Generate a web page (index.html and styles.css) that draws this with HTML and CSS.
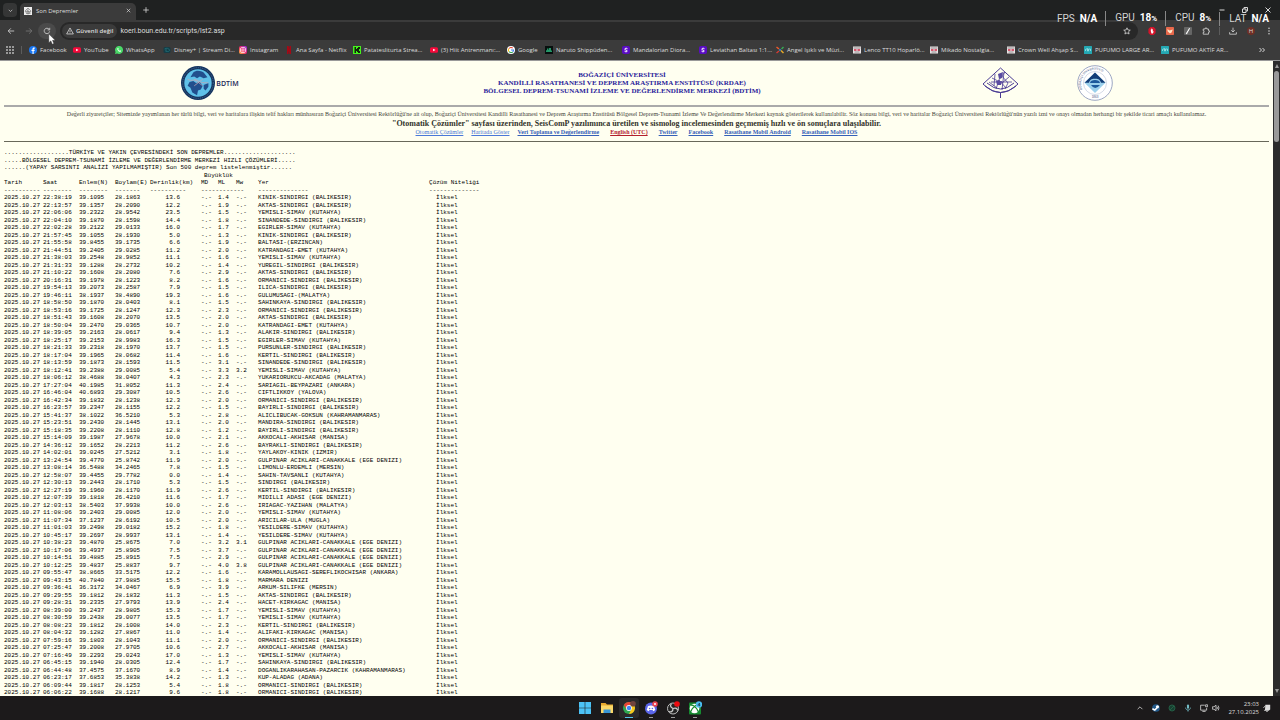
FILE: index.html
```html
<!DOCTYPE html>
<html lang="tr">
<head>
<meta charset="utf-8">
<title>Son Depremler</title>
<link rel="stylesheet" href="styles.css">
</head>
<body>
<header class="browser">
  <div class="tabstrip">
    <button class="tab-search" aria-label="Sekmelerde ara"><svg viewBox="0 0 10 10" class="i7"><path d="M2.5 4 5 6.5 7.500 4" class="line"/></svg></button>
    <div class="tab">
      <svg viewBox="0 0 16 16" class="i8"><rect width="16" height="16" fill="#eee"/><path d="M2 8 8 2l6 6-3 4H5z M3 9h10M8 3v12M5 6l6 5M4 13h9" fill="none" stroke="#777" stroke-width="1.300"/></svg>
      <span class="tab-title">Son Depremler</span>
      <button class="plain" aria-label="Sekmeyi kapat"><svg viewBox="0 0 10 10" class="i7"><path d="m2.500 2.500 5 5m0-5-5 5" class="line"/></svg></button>
    </div>
    <button class="plain new-tab" aria-label="Yeni sekme"><svg viewBox="0 0 10 10" class="i8"><path d="M5 1.500v7M1.500 5h7" class="line"/></svg></button>
    <div class="window-buttons">
      <button class="plain" aria-label="Simge durumuna küçült"><svg viewBox="0 0 8 8" class="i8"><path d="M1.500 4h5" class="line"/></svg></button>
      <button class="plain" aria-label="Önceki boyut"><svg viewBox="0 0 8 8" class="i8"><path d="M1.500 3h3.500v3.500H1.500zM3 3V1.500h3.500V5H5" class="line"/></svg></button>
      <button class="plain" aria-label="Kapat"><svg viewBox="0 0 8 8" class="i8"><path d="m1.500 1.500 5 5m0-5-5 5" class="line"/></svg></button>
    </div>
  </div>
  <div class="toolbar">
    <button class="nav" aria-label="Geri"><svg viewBox="0 0 10 10" class="i8"><path d="M9 5H1.500M4.800 1.700 1.500 5l3.300 3.300" class="line"/></svg></button>
    <button class="nav dim" aria-label="İleri"><svg viewBox="0 0 10 10" class="i8"><path d="M1 5h7.500M5.200 1.700 8.500 5 5.200 8.300" class="line"/></svg></button>
    <button class="nav reload" aria-label="Yenile"><svg viewBox="0 0 10 10" class="i8"><path d="M8.300 5.500A3.400 3.400 0 1 1 7.600 2.800M8.400 1v2.600H5.800" class="line"/></svg></button>
    <div class="address">
      <button class="security"><svg viewBox="0 0 10 10" class="i8"><path d="M5 1.200 9.200 8.700H.8zM5 4v2.300M5 7v.8" class="line"/></svg>Güvenli değil</button>
      <input class="url" type="text" aria-label="Adres" value="koeri.boun.edu.tr/scripts/lst2.asp">
      <button class="plain" aria-label="Yer işareti ekle"><svg viewBox="0 0 10 10" class="i8"><path d="m5 1 1.200 2.700 2.900.3-2.200 1.900.7 2.900L5 7.300 2.400 8.800l.7-2.900L.9 4l2.900-.3z" class="line"/></svg></button>
    </div>
    <div class="extensions">
      <button class="plain" aria-label="Reklam engelleyici"><svg viewBox="0 0 10 10" class="i8"><path d="M3 0h4l2.500 2.500v5L7 10H3L.5 7.500v-5z" fill="#d5142b"/><path d="M3.500 5V3h.8V2h.8v.8h.9V6l.7-.8.5.4L6 8H4.300z" fill="#fff"/></svg></button>
      <button class="plain" aria-label="Uzantı"><svg viewBox="0 0 10 10" class="i8"><rect width="10" height="10" rx="1" fill="#e9684b"/><path d="m1.800 2.500 2.500 2L8.500 3 7 7l-2 1-3-2.700z" fill="#ffe7c9"/></svg></button>
      <button class="plain" aria-label="Uzantı"><svg viewBox="0 0 10 10" class="i8"><rect width="10" height="10" rx="1" fill="#666"/><path d="M7 1.500 3 8.500M2.500 7.500l1.500 1" stroke="#fff" stroke-width="1.300"/></svg></button>
      <button class="plain" aria-label="Uzantılar"><svg viewBox="0 0 10 10" class="i8"><path d="M1.500 2.500H4V1.300h2v1.200h2.200v2.200h1v1.800h-1V9H1.500V6.800h1V4.700h-1z" class="line"/></svg></button>
      <span class="divider"></span>
      <button class="plain" aria-label="İndirilenler"><svg viewBox="0 0 10 10" class="i8"><path d="M5 .8v5.400M2.700 4 5 6.300 7.300 4M.8 6.500V9h8.400V6.500" class="line"/></svg></button>
      <button class="profile">H</button>
      <button class="plain" aria-label="Menü"><svg viewBox="0 0 10 10" class="i8"><g fill="#ddd"><circle cx="5" cy="1.500" r=".9"/><circle cx="5" cy="5" r=".9"/><circle cx="5" cy="8.500" r=".9"/></g></svg></button>
    </div>
    <svg class="cursor" viewBox="0 0 10 14"><path d="M1 0v11l2.600-2.300L5.300 13l2-.9-1.700-4L9 8z" fill="#fff" stroke="#333" stroke-width=".5"/></svg>
  </div>
  <nav class="bookmarks">
    <button class="plain apps" aria-label="Uygulamalar"><svg viewBox="0 0 8 8" class="i8"><path d="M0 0h2v2H0zM3 0h2v2H3zM6 0h2v2H6zM0 3h2v2H0zM3 3h2v2H3zM6 3h2v2H6zM0 6h2v2H0zM3 6h2v2H3zM6 6h2v2H6z" fill="#999"/></svg></button>
    <span class="divider"></span>
    <a href="#" class="bm bm-facebook"><svg viewBox="0 0 16 16" class="i8"><circle cx="8" cy="8" r="8" fill="#1977f3"/><path d="M7 16V10H5V7.500h2V6c0-2 1-3 3-3h1.500v2.300h-1C9.700 5.300 9.300 5.700 9.300 6.300v1.200h2.200L11 10H9.300v6z" fill="#fff"/></svg>Facebook</a>
    <a href="#" class="bm bm-youtube"><svg viewBox="0 0 16 16" class="i8"><rect y="2.500" width="16" height="11" rx="3" fill="#f5093a"/><path d="m6.300 5.300 4.700 2.700-4.700 2.700z" fill="#fff"/></svg>YouTube</a>
    <a href="#" class="bm bm-whatsapp"><svg viewBox="0 0 16 16" class="i8"><path d="M0 16 1.200 12A8 8 0 1 1 4.300 15z" fill="#4ad968"/><path d="M5.500 4c-3 2.500 2.500 9 6 7.500l.5-2-2-1-1 1C7.500 9 7 8 6.500 7l.8-1-.8-2z" fill="#fff"/></svg>WhatsApp</a>
    <a href="#" class="bm bm-disney"><svg viewBox="0 0 16 16" class="i8"><rect x="1" y="2" width="14" height="12" rx="3" fill="#143c46"/><path d="M3 6c5-3 9-1 10 2s-5 4-8 2M6 5v6" stroke="#2a8b91" fill="none"/></svg>Disney+ | Stream Di...</a>
    <a href="#" class="bm bm-instagram"><svg viewBox="0 0 16 16" class="i8"><defs><linearGradient id="ig" x1="0" y1="1" x2="1" y2="0"><stop stop-color="#ffc13b"/><stop offset=".5" stop-color="#ef2470"/><stop offset="1" stop-color="#8b35ee"/></linearGradient></defs><rect width="16" height="16" rx="4" fill="url(#ig)"/><rect x="3" y="3" width="10" height="10" rx="3" fill="none" stroke="#fff" stroke-width="1.400"/><circle cx="8" cy="8" r="2.400" fill="none" stroke="#fff" stroke-width="1.400"/></svg>Instagram</a>
    <a href="#" class="bm bm-netflix"><svg viewBox="0 0 16 16" class="i8"><path d="M4 0h3l2 6V0h3v16H9L7 10v6H4z" fill="#a40916"/></svg>Ana Sayfa - Netflix</a>
    <a href="#" class="bm"><svg viewBox="0 0 16 16" class="i8"><rect width="16" height="16" fill="#44f21c"/><path d="M3 2h3v4h2V4h2V2h4v4h-2v4h2v4h-4v-2H8v-2H6v4H3z" fill="#12250b"/></svg>Patatesliturta Strea...</a>
    <a href="#" class="bm"><svg viewBox="0 0 16 16" class="i8"><rect y="2.500" width="16" height="11" rx="3" fill="#f5093a"/><path d="m6.300 5.300 4.700 2.700-4.700 2.700z" fill="#fff"/></svg>(3) Hiit Antrenmanı:...</a>
    <a href="#" class="bm bm-google"><svg viewBox="0 0 16 16" class="i8"><circle cx="8" cy="8" r="8" fill="#fff"/><g fill="none" stroke-width="2.200"><path d="M4 5a5 5 0 0 1 7.600-.7" stroke="#e84335"/><path d="M4 5a5 5 0 0 0 .2 6.300" stroke="#fbbc05"/><path d="M4.200 11.300a5 5 0 0 0 7.300.3" stroke="#34a853"/><path d="M11.500 11.600A5 5 0 0 0 13 8H8" stroke="#4285f4"/></g></svg>Google</a>
    <a href="#" class="bm"><svg viewBox="0 0 16 16" class="i8"><rect width="16" height="16" fill="#07100e"/><path d="M2 12V9l2-1V5h3v3h1V4h4v4l2 2v2z" fill="#249869"/></svg>Naruto Shippüden...</a>
    <a href="#" class="bm"><svg viewBox="0 0 16 16" class="i8"><rect width="16" height="16" rx="4" fill="#5a0cc4"/><path d="M11 5.500C10 4 5.500 4 5.500 6.300S10.700 8 10.700 10 6 12 5 10.300" fill="none" stroke="#fff" stroke-width="2"/></svg>Mandalorian Diora...</a>
    <a href="#" class="bm"><svg viewBox="0 0 16 16" class="i8"><rect width="16" height="16" rx="4" fill="#5a0cc4"/><path d="M11 5.500C10 4 5.500 4 5.500 6.300S10.700 8 10.700 10 6 12 5 10.300" fill="none" stroke="#fff" stroke-width="2"/></svg>Leviathan Baltası 1:1...</a>
    <a href="#" class="bm"><svg viewBox="0 0 16 16" class="i8"><g stroke-width="3"><path d="m1 2 5 4" stroke="#f05b2c"/><path d="m15 2-4 4" stroke="#36ac55"/><path d="m1 14 5-4" stroke="#d93c33"/><path d="m10 9 5 5" stroke="#e5a928"/></g><circle cx="8" cy="8" r="2" fill="#398cd2"/></svg>Angel Işıklı ve Müzi...</a>
    <a href="#" class="bm"><svg viewBox="0 0 16 16" class="i8"><rect y="1" width="16" height="14" fill="#e9e3e4"/><path d="M1 4h14M3 12h10" stroke="#777" stroke-width="1.500"/><path d="M2 8h5m2 0h5" stroke="#d12c48" stroke-width="3"/></svg>Lenco TT10 Hoparlö...</a>
    <a href="#" class="bm"><svg viewBox="0 0 16 16" class="i8"><rect y="1" width="16" height="14" fill="#e9e3e4"/><path d="M1 4h14M3 12h10" stroke="#777" stroke-width="1.500"/><path d="M2 8h5m2 0h5" stroke="#d12c48" stroke-width="3"/></svg>Mikado Nostalgia...</a>
    <a href="#" class="bm"><svg viewBox="0 0 16 16" class="i8"><rect y="1" width="16" height="14" fill="#e9e3e4"/><path d="M1 4h14M3 12h10" stroke="#777" stroke-width="1.500"/><path d="M2 8h5m2 0h5" stroke="#d12c48" stroke-width="3"/></svg>Crown Well Ahşap S...</a>
    <a href="#" class="bm"><svg viewBox="0 0 16 16" class="i8"><rect width="16" height="16" rx="1" fill="#24a8b3"/><path d="M3 10V7l4-2v5h2V6h4v4" stroke="#a8e7e9" fill="none" stroke-width="1.500"/></svg>PUFUMO LARGE AR...</a>
    <a href="#" class="bm"><svg viewBox="0 0 16 16" class="i8"><rect width="16" height="16" rx="1" fill="#24a8b3"/><path d="M3 10V7l4-2v5h2V6h4v4" stroke="#a8e7e9" fill="none" stroke-width="1.500"/></svg>PUFUMO AKTİF AR...</a>
    <button class="plain more" aria-label="Diğer yer işaretleri"><svg viewBox="0 0 8 8" class="i8"><path d="m1.500 2 2 2-2 2M4.500 2l2 2-2 2" class="line"/></svg></button>
  </nav>
</header>

<div class="viewport">
  <main class="page">
    <header class="masthead">
      <div class="brand">
        <svg viewBox="0 0 36 36" class="emblem"><circle cx="18" cy="18" r="18" fill="#14345f"/><circle cx="18" cy="18" r="14.500" fill="#5fc1e9"/><path d="M13 7c3-3 8-2 11 0l4 5-4 1-4-2-3 2-3-2-4 1zM9 17l4-1 3 2 4-1 3 4-2 4-3 1-1 5-5-3-2-5-3-2zM24 20l5-2v4l-3 4-2-2z" fill="#214f8d"/><path d="M7 14c5 3 8-1 12 2s7 1 10 2M14 14l9 7m0-7-9 7" fill="none" stroke="#c4a5b3" stroke-width=".8"/><circle cx="18" cy="18" r="16.200" fill="none" stroke="#6f8faf" stroke-width=".6" stroke-dasharray="1 1"/></svg>
        <span>BDTİM</span>
      </div>
      <h1 class="institution">BOĞAZİÇİ ÜNİVERSİTESİ<br>KANDİLLİ RASATHANESİ VE DEPREM ARAŞTIRMA ENSTİTÜSÜ (KRDAE)<br>BÖLGESEL DEPREM-TSUNAMİ İZLEME VE DEĞERLENDİRME MERKEZİ (BDTİM)</h1>
      <div class="seals">
        <svg viewBox="0 0 36 36" class="emblem"><g fill="none" stroke="#4a3b94"><path d="M17.500 3 35 19Q17.500 36 0 19zM4 18q13.500 12 27 0M2 21q15.500 13 31 0M17.500 28v5" stroke-width="1"/><path d="M9 13l6 3 7-9M8 17h21M13 24l3-9 7 8M21 7l-2 18M26 12l-7 6M6 17l8 6M18 10l7 8-3 6M12 9l-1 12" stroke-width=".8"/></g><path d="m15 9 5-2-1 6-3 1zM13 16h6l-1 4h-4z" fill="#5b4ca2"/></svg>
        <svg viewBox="0 0 36 36" class="emblem"><defs><path id="seal-arc" d="M5.300 24.500A14 14 0 1 1 30.700 24.500"/></defs><circle cx="18" cy="18" r="17.300" fill="#fff" stroke="#8491b5" stroke-width=".8"/><circle cx="18" cy="18" r="11.500" fill="none" stroke="#aab6cf" stroke-width=".5"/><text class="seal-text"><textPath href="#seal-arc">BOĞAZİÇİ ÜNİVERSİTESİ</textPath></text><text x="18" y="33" text-anchor="middle" class="seal-text">1863</text><path d="m18 7.500 10.500 10.200L18 28 7.500 17.700z" fill="#9bd0ec"/><path d="m18 7.500 10.500 10.200H24c-1-4-4-4-6-4s-5 0-6 4H7.500z" fill="#123d77"/><path d="M13 18c0-4 10-4 10 0zM14 20h9q-5 6-9 0" fill="#1c599c"/></svg>
      </div>
    </header>
    <section class="notice">
      <p class="legal">Değerli ziyaretçiler; Sitemizde yayımlanan her türlü bilgi, veri ve haritalara ilişkin telif hakları münhasıran Boğaziçi Üniversitesi Rektörlüğü'ne ait olup, Boğaziçi Üniversitesi Kandilli Rasathanesi ve Deprem Araştırma Enstitüsü Bölgesel Deprem-Tsunami İzleme Ve Değerlendirme Merkezi kaynak gösterilerek kullanılabilir. Söz konusu bilgi, veri ve haritalar Boğaziçi Üniversitesi Rektörlüğü'nün yazılı izni ve onayı olmadan herhangi bir şekilde ticari amaçlı kullanılamaz.</p>
      <p class="automatic">"Otomatik Çözümler" sayfası üzerinden, SeisComP yazılımınca üretilen ve sismolog incelemesinden geçmemiş hızlı ve ön sonuçlara ulaşılabilir.</p>
      <nav class="links">
        <a href="#">Otomatik Çözümler</a><a href="#">Haritada Göster</a><a href="#" class="strong">Veri Toplama ve Değerlendirme</a><a href="#" class="strong english">English (UTC)</a><a href="#" class="strong">Twitter</a><a href="#" class="strong">Facebook</a><a href="#" class="strong">Rasathane Mobil Android</a><a href="#" class="strong">Rasathane Mobil IOS</a>
      </nav>
    </section>
    <section class="report">
      <pre class="heading">..................TÜRKİYE VE YAKIN ÇEVRESİNDEKİ SON DEPREMLER....................
.....BÖLGESEL DEPREM-TSUNAMİ İZLEME VE DEĞERLENDİRME MERKEZİ HIZLI ÇÖZÜMLERİ.....
......(YAPAY SARSINTI ANALİZİ YAPILMAMIŞTIR) Son 500 deprem listelenmiştir......</pre>
      <table class="quakes">
        <colgroup><col class="c-date"><col class="c-time"><col class="c-lat"><col class="c-lon"><col class="c-depth"><col class="c-md"><col class="c-ml"><col class="c-mw"><col class="c-place"><col class="c-quality"></colgroup>
        <thead>
          <tr><th colspan="5"></th><th colspan="3" class="size">Büyüklük</th><th colspan="2"></th></tr>
          <tr><th>Tarih</th><th>Saat</th><th>Enlem(N)</th><th>Boylam(E)</th><th>Derinlik(km)</th><th>MD</th><th>ML</th><th>Mw</th><th>Yer</th><th>Çözüm Niteliği</th></tr>
          <tr><td>----------</td><td>--------</td><td>--------</td><td>-------</td><td>----------</td><td colspan="3">------------</td><td>--------------</td><td>--------------</td></tr>
        </thead>
        <tbody id="rows"></tbody>
      </table>
    </section>
  </main>
  <div class="scrollbar"><span class="arrow up"></span><span class="thumb"></span><span class="arrow down"></span></div>
</div>

<footer class="taskbar">
  <div class="pinned">
    <button class="app" aria-label="Başlat"><svg viewBox="0 0 14 14"><path d="M1 1h5.700v5.700H1zM7.300 1H13v5.700H7.300zM1 7.300h5.700V13H1zM7.300 7.300H13V13H7.300z" fill="#4cc2f5"/></svg></button>
    <button class="app" aria-label="Dosya Gezgini"><svg viewBox="0 0 14 14"><path d="M1 2h4.500L7 3.500h6V12H1z" fill="#e8a92e"/><path d="M1 4.500h12V12H1z" fill="#fbd869"/><path d="M3.500 8.500h7V12h-7z" fill="#3996d5"/></svg></button>
    <button class="app active" aria-label="Chrome"><svg viewBox="0 0 14 14"><circle cx="7" cy="7" r="6" fill="#2fa952"/><path d="M1.800 4A6 6 0 0 1 12.200 4L7 5.500 4.500 8.500z" fill="#e94435"/><path d="M12.200 4A6 6 0 0 1 7 13l2.500-5L7 4z" fill="#fbc61a"/><circle cx="7" cy="7" r="2.900" fill="#fff"/><circle cx="7" cy="7" r="2.200" fill="#4285f4"/><circle cx="11" cy="2.800" r="2.800" fill="#70433d"/></svg></button>
    <button class="app open" aria-label="Discord"><svg viewBox="0 0 14 14"><circle cx="7" cy="7.500" r="6" fill="#5b66ea"/><path d="M4 5q3-1 6 0l1.300 4-2 1.300L8.500 9h-3l-.8 1.300-2-1.300z" fill="#fff"/><circle cx="5.600" cy="7.500" r=".8" fill="#5b66ea"/><circle cx="8.400" cy="7.500" r=".8" fill="#5b66ea"/><circle cx="11" cy="3" r="2.800" fill="#e94450"/><circle cx="11" cy="3" r="1" fill="#fff"/></svg></button>
    <button class="app open" aria-label="OBS"><svg viewBox="0 0 14 14"><circle cx="7" cy="7.500" r="5.500" fill="#242424" stroke="#ccc" stroke-width=".9"/><path d="M7 7.500C4 6 4 4 5.500 3M7 7.500c3-1 4.500 0 4.500 2M7 7.500c0 3-2 4-4 3" fill="none" stroke="#ccc" stroke-width="1.300"/><circle cx="11" cy="3" r="2.800" fill="#ed0c10"/></svg></button>
    <button class="app open" aria-label="Xbox"><svg viewBox="0 0 14 14"><rect x="1" y="1.500" width="12" height="12" rx="1" fill="#168b31"/><circle cx="6.500" cy="7.500" r="4.800" fill="#fff"/><path d="M2.500 11Q4 7 6.500 5.500 9 7 10.500 11M3 4q2 0 3.500 1.500Q8 4 10 4" fill="none" stroke="#168b31" stroke-width="1.300"/><circle cx="11" cy="3.500" r="3.200" fill="#4abdf0"/><path d="M11.500 5.200V2L9.800 4.200h2.600" fill="none" stroke="#173b52" stroke-width=".7"/></svg></button>
  </div>
  <div class="tray">
    <button class="plain" aria-label="Gizli simgeler"><svg viewBox="0 0 10 10" class="i8"><path d="M2 6.500 5 3.500l3 3" class="line"/></svg></button>
    <button class="plain" aria-label="Steam"><svg viewBox="0 0 10 10" class="i8"><circle cx="5" cy="5" r="4.800" fill="#225888"/><path d="m.5 6 3 1.500L6 5" stroke="#fff" stroke-width="2" fill="none"/><circle cx="6.800" cy="3.500" r="2" fill="#fff"/></svg></button>
    <button class="plain" aria-label="Durum"><svg viewBox="0 0 10 10" class="i8"><circle cx="5" cy="5" r="3.800" fill="#173f30" stroke="#28684d"/><path d="m2.500 7.500 5-5" stroke="#28684d"/></svg></button>
    <button class="plain" aria-label="Mikrofon"><svg viewBox="0 0 10 10" class="i8"><rect x="3.700" y=".5" width="2.600" height="5.500" rx="1.300" fill="#74bec7"/><path d="M2 4.500c0 4 6 4 6 0M5 7.500v2" fill="none" stroke="#74bec7"/></svg></button>
    <button class="plain pair" aria-label="Ağ ve ses"><svg viewBox="0 0 10 10" class="i8"><path d="M6 1.500H.8v6.200h7.500V5M3 9.300h4M7 1h2.500v2.500H7z" class="line"/></svg><svg viewBox="0 0 10 10" class="i8"><path d="M.5 3.500h2L5 1.500v7l-2.500-2h-2zM6.300 3.500q1 1.500 0 3M7.700 2q2 3 0 6" class="line"/></svg></button>
    <button class="clock">23:03<br>27.10.2025</button>
    <button class="plain" aria-label="Bildirimler"><svg viewBox="0 0 10 10" class="i8"><path d="M3 1h6v6L7 8.500H1L2.500 7z" fill="#ddd"/><path d="M4 9.500h2M.5 5 3 2" stroke="#ddd"/></svg></button>
  </div>
</footer>

<aside class="stats">
  <span class="stat">FPS <b>N/A</b></span><span class="stat">GPU <b>18<small>%</small></b></span><span class="stat">CPU <b>8<small>%</small></b></span><span class="stat">LAT <b>N/A</b></span>
</aside>
<script src="quakes.js"></script>
</body>
</html>
```

FILE: styles.css
```css
* { box-sizing: border-box; }
body {
  margin: 0;
  height: 100vh;
  display: flex;
  flex-direction: column;
  overflow: hidden;
  position: relative;
  background: #1c1a1b;
  font-family: "Open Sans", "Noto Sans", sans-serif;
}
button { font: inherit; color: inherit; border: 0; padding: 0; background: none; }
svg { display: block; flex: none; }
.i7 { width: 7px; height: 7px; }
.i8 { width: 8px; height: 8px; }
.line { fill: none; stroke: #d8d8d8; stroke-width: 1; }
.plain { display: flex; align-items: center; }
.divider { width: 1px; height: 8px; background: #5c5c5c; }

.browser { flex: none; background: #3b3b3b; color: #ddd; }
.tabstrip { display: flex; align-items: center; height: 20px; padding-left: 3px; background: #1f2121; }
.tab-search {
  display: flex; align-items: center; justify-content: center;
  width: 14px; height: 14px; border-radius: 4px; background: #353636;
}
.tab {
  display: flex; align-items: center; align-self: flex-end; gap: 4px;
  width: 116px; height: 17px; margin-left: 3px; padding: 0 4px 2px;
  border-radius: 5px 5px 0 0; background: #3b3b3b; font-size: 6px;
}
.tab-title { flex: 1; }
.new-tab { margin-left: 6px; }
.window-buttons { display: flex; gap: 15px; margin-left: auto; padding-right: 8px; }

.toolbar { position: relative; display: flex; align-items: center; height: 21px; padding: 1px 7px 0 2px; }
.nav { display: flex; align-items: center; justify-content: center; width: 18px; height: 16px; }
.dim { opacity: 0.4; }
.reload { border-radius: 8px; background: #4a4a4a; }
.address {
  display: flex; align-items: center; flex: 1; height: 18px;
  margin-left: 4px; padding: 0 7px 0 2px; border-radius: 9px; background: #282828;
}
.security {
  display: flex; align-items: center; gap: 2px; height: 14px; padding: 0 4px;
  border-radius: 7px; background: #3b3b3b; font-size: 6px; font-weight: 600; white-space: nowrap;
}
.url {
  flex: 1; min-width: 0; height: 14px; margin-left: 3px; padding: 0; border: 0;
  background: none; color: #ddd; font: 7px/14px Roboto, "Noto Sans", sans-serif;
}
.extensions { display: flex; align-items: center; gap: 10px; padding-left: 10px; }
.extensions .divider { margin: 0 -1px; }
.profile { width: 8px; height: 8px; border-radius: 4px; background: #6f2f25; font-size: 6px; line-height: 8px; }
.cursor { position: absolute; left: 48px; top: 14px; width: 8px; height: 11px; }

.bookmarks {
  display: flex; align-items: center; height: 19px; padding: 0 14px 2px 6px;
  font-size: 6px; white-space: nowrap;
}
.bookmarks > .divider { margin: 0 7px; }
.bm { display: flex; align-items: center; gap: 3px; flex: none; width: 77px; color: #ddd; text-decoration: none; }
.bm-facebook { width: 44px; }
.bm-youtube { width: 42px; }
.bm-whatsapp { width: 48px; }
.bm-disney { width: 76px; }
.bm-instagram { width: 46px; }
.bm-netflix { width: 68px; }
.bm-google { width: 38px; }
.more { margin-left: auto; }

.viewport { display: flex; flex: 1; min-height: 0; background: #fffff0; border-top: 1px solid #999; }
.page { flex: 1; min-width: 0; padding: 0 4px; overflow: hidden; font-family: "Liberation Serif", serif; }
.masthead {
  display: grid; grid-template-columns: 1fr 1fr 1fr; align-items: center;
  height: 46px; padding-right: 29px; border-bottom: 2px solid #aaa;
}
.brand { display: flex; align-items: center; justify-content: center; gap: 1px; color: #1c2757; font: 600 7px "Open Sans", sans-serif; }
.emblem { width: 36px; height: 36px; }
.brand .emblem { width: 34px; height: 34px; }
.institution {
  justify-self: center; margin: 0; color: #2a1c9a;
  font-size: 7px; line-height: 8px; text-align: center; white-space: nowrap;
}
.seals { display: flex; justify-content: center; gap: 58px; padding-left: 28px; }
.seal-text { font: 3px "Liberation Sans", sans-serif; fill: #44547f; }
.notice { padding: 3px 0 2px; border-bottom: 1px solid #68685a; text-align: center; white-space: nowrap; }
.legal, .automatic { display: flex; justify-content: center; margin: 0; }
.legal { color: #44443a; font-size: 6px; line-height: 9px; }
.automatic { color: #33332b; font-size: 8px; font-weight: bold; line-height: 9px; }
.links { display: flex; justify-content: center; gap: 11px; padding-bottom: 2px; font-size: 6px; line-height: 9px; }
.links a { color: #4a78d8; }
.links a:nth-child(-n+2) { margin-right: -3px; }
.links .strong { color: #3561b8; font-weight: bold; }
.links .english { color: #b3202c; }

.report { padding-top: 7px; color: #000; font: 6px/1.25 "Liberation Mono", monospace; }
.heading { margin: 0; font: inherit; }
.quakes { width: 480px; table-layout: fixed; border-collapse: collapse; font: inherit; white-space: nowrap; }
.quakes th, .quakes td { padding: 0; font-weight: normal; text-align: left; }
.quakes .size { padding-left: 3px; }
.quakes .depth { padding-right: 21px; text-align: right; }
.quakes .quality { padding-left: 7px; }
.c-date { width: 39px; }
.c-time, .c-lat { width: 36px; }
.c-lon { width: 35px; }
.c-depth { width: 51px; }
.c-md { width: 17px; }
.c-ml { width: 18px; }
.c-mw { width: 22px; }
.c-place { width: 171px; }

.scrollbar {
  display: flex; flex-direction: column; align-items: center; width: 7px; padding: 3px 0; background: #2c2c2c;
}
.thumb { width: 5px; height: 71px; margin-top: 3px; border-radius: 3px; background: #9a9a9a; }
.arrow { border: 2px solid transparent; }
.up { border-top: 0; border-bottom: 4px solid #9a9a9a; }
.down { margin-top: auto; border-bottom: 0; border-top: 4px solid #9a9a9a; }

.taskbar {
  display: grid; grid-template-columns: 1fr auto 1fr; align-items: center; flex: none;
  height: 24px; background: #1c1a1b; color: #ddd;
}
.pinned { display: flex; grid-column: 2; gap: 2px; }
.app { position: relative; display: flex; align-items: center; justify-content: center; width: 20px; height: 20px; border-radius: 3px; }
.app svg { width: 14px; height: 14px; }
.active { background: #2c2a2b; }
.open::after, .active::after {
  content: ""; position: absolute; left: 50%; bottom: 0; width: 4px; height: 1px;
  transform: translateX(-50%); background: #999;
}
.active::after { width: 8px; background: #55c4e9; }
.tray { display: flex; align-items: center; justify-content: flex-end; gap: 8px; padding-right: 9px; }
.pair { gap: 4px; }
.clock { font-size: 6px; line-height: 8px; text-align: right; }
.tray > :last-child { margin-left: -4px; }

.stats {
  position: absolute; right: 11px; top: 11px; display: flex; align-items: center;
  color: #d5d5d5; font: 10px/14px Roboto, sans-serif; white-space: nowrap;
}
.stat { display: flex; gap: 5px; align-items: baseline; }
.stat + .stat { margin-left: 8px; padding-left: 9px; border-left: 1px solid #888; }
.stat b { color: #fff; }
.stat small { font-size: 8px; }
```

FILE: quakes.js
```js
// time, latitude, longitude, depth, ML, Mw, place
const quakes = `22:38:19|39.1095|28.1863|13.6|1.4|-.-|KINIK-SINDIRGI (BALIKESIR)
22:13:57|39.1357|28.2090|12.2|1.9|-.-|AKTAS-SINDIRGI (BALIKESIR)
22:06:06|39.2322|28.9542|23.5|1.5|-.-|YEMISLI-SIMAV (KUTAHYA)
22:04:10|39.1870|28.1598|14.4|1.8|-.-|SINANDEDE-SINDIRGI (BALIKESIR)
22:02:28|39.2122|29.0133|16.0|1.7|-.-|EGIRLER-SIMAV (KUTAHYA)
21:57:45|39.1055|28.1930|5.0|1.3|-.-|KINIK-SINDIRGI (BALIKESIR)
21:55:58|39.8455|39.1735|6.6|1.9|-.-|BALTASI-(ERZINCAN)
21:44:51|39.2405|29.0285|11.2|2.0|-.-|KATRANDAGI-EMET (KUTAHYA)
21:38:03|39.2548|28.9852|11.1|1.6|-.-|YEMISLI-SIMAV (KUTAHYA)
21:31:33|39.1288|28.2732|10.2|1.4|-.-|YUREGIL-SINDIRGI (BALIKESIR)
21:10:22|39.1608|28.2080|7.6|2.9|-.-|AKTAS-SINDIRGI (BALIKESIR)
20:16:31|39.1978|28.1223|8.2|1.6|-.-|ORMANICI-SINDIRGI (BALIKESIR)
19:54:13|39.2073|28.2587|7.9|1.5|-.-|ILICA-SINDIRGI (BALIKESIR)
19:46:11|38.1937|38.4890|19.3|1.6|-.-|GULUMUSAGI-(MALATYA)
18:58:50|39.1870|28.0403|8.1|1.5|-.-|SAHINKAYA-SINDIRGI (BALIKESIR)
18:53:16|39.1725|28.1247|12.3|2.3|-.-|ORMANICI-SINDIRGI (BALIKESIR)
18:51:43|39.1608|28.2070|13.5|2.0|-.-|AKTAS-SINDIRGI (BALIKESIR)
18:50:04|39.2470|29.0365|10.7|2.0|-.-|KATRANDAGI-EMET (KUTAHYA)
18:39:05|39.2163|28.0617|9.4|1.3|-.-|ALAKIR-SINDIRGI (BALIKESIR)
18:25:17|39.2153|28.9983|16.3|1.5|-.-|EGIRLER-SIMAV (KUTAHYA)
18:21:33|39.2318|28.1970|13.7|1.5|-.-|PURSUNLER-SINDIRGI (BALIKESIR)
18:17:04|39.1965|28.0682|11.4|1.6|-.-|KERTIL-SINDIRGI (BALIKESIR)
18:13:59|39.1873|28.1593|11.5|3.1|-.-|SINANDEDE-SINDIRGI (BALIKESIR)
18:12:41|39.2388|29.0085|5.4|3.3|3.2|YEMISLI-SIMAV (KUTAHYA)
18:06:12|38.4688|38.0407|4.3|2.3|-.-|YUKARIORUKCU-AKCADAG (MALATYA)
17:27:04|40.1985|31.8052|11.3|2.4|-.-|SARIAGIL-BEYPAZARI (ANKARA)
16:46:04|40.6893|29.3087|10.5|2.6|-.-|CIFTLIKKOY (YALOVA)
16:42:34|39.1832|28.1238|12.3|2.0|-.-|ORMANICI-SINDIRGI (BALIKESIR)
16:23:57|39.2347|28.1155|12.2|1.5|-.-|BAYIRLI-SINDIRGI (BALIKESIR)
15:41:37|38.1022|36.5210|5.3|2.8|-.-|ALICLIBUCAK-GOKSUN (KAHRAMANMARAS)
15:23:51|39.2430|28.1445|13.1|2.0|-.-|MANDIRA-SINDIRGI (BALIKESIR)
15:18:35|39.2208|28.1110|12.8|1.2|-.-|BAYIRLI-SINDIRGI (BALIKESIR)
15:14:09|39.1987|27.9678|10.0|2.1|-.-|AKKOCALI-AKHISAR (MANISA)
14:36:12|39.1652|28.2213|11.2|2.6|-.-|BAYRAKLI-SINDIRGI (BALIKESIR)
14:02:01|39.0245|27.5212|3.1|1.8|-.-|YAYLAKOY-KINIK (IZMIR)
13:24:54|39.4770|25.8742|11.9|2.0|-.-|GULPINAR ACIKLARI-CANAKKALE (EGE DENIZI)
13:08:14|36.5488|34.2465|7.8|1.5|-.-|LIMONLU-ERDEMLI (MERSIN)
12:58:07|39.4455|29.7782|0.0|1.4|-.-|SAHIN-TAVSANLI (KUTAHYA)
12:30:13|39.2443|28.1710|5.3|1.5|-.-|SINDIRGI (BALIKESIR)
12:27:19|39.1960|28.1170|11.9|2.6|-.-|KERTIL-SINDIRGI (BALIKESIR)
12:07:39|39.1818|26.4210|11.6|1.7|-.-|MIDILLI ADASI (EGE DENIZI)
12:03:13|38.5403|37.9938|10.0|2.6|-.-|IRIAGAC-YAZIHAN (MALATYA)
11:08:06|39.2403|29.0085|12.0|2.0|-.-|YEMISLI-SIMAV (KUTAHYA)
11:07:34|37.1237|28.6192|10.5|2.0|-.-|ARICILAR-ULA (MUGLA)
11:01:03|39.2498|29.0182|15.2|1.8|-.-|YESILDERE-SIMAV (KUTAHYA)
10:45:17|39.2697|28.9937|13.1|1.4|-.-|YESILDERE-SIMAV (KUTAHYA)
10:38:23|39.4870|25.8675|7.0|3.2|3.1|GULPINAR ACIKLARI-CANAKKALE (EGE DENIZI)
10:17:06|39.4937|25.8905|7.5|3.7|-.-|GULPINAR ACIKLARI-CANAKKALE (EGE DENIZI)
10:14:51|39.4885|25.8915|7.5|2.9|-.-|GULPINAR ACIKLARI-CANAKKALE (EGE DENIZI)
10:12:25|39.4837|25.8837|9.7|4.0|3.8|GULPINAR ACIKLARI-CANAKKALE (EGE DENIZI)
09:55:47|38.8665|33.5175|12.2|1.6|-.-|KARAMOLLAUSAGI-SEREFLIKOCHISAR (ANKARA)
09:43:15|40.7840|27.9885|15.5|1.8|-.-|MARMARA DENIZI
09:36:41|36.3172|34.0467|6.9|3.9|-.-|ARKUM-SILIFKE (MERSIN)
09:29:55|39.1812|28.1832|11.3|1.5|-.-|AKTAS-SINDIRGI (BALIKESIR)
09:28:31|39.2335|27.9793|13.9|2.4|-.-|HACET-KIRKAGAC (MANISA)
08:39:00|39.2437|28.9805|15.3|1.7|-.-|YEMISLI-SIMAV (KUTAHYA)
08:30:59|39.2438|29.0077|13.5|1.7|-.-|YEMISLI-SIMAV (KUTAHYA)
08:08:23|39.1812|28.1008|14.0|2.3|-.-|KERTIL-SINDIRGI (BALIKESIR)
08:04:32|39.1282|27.8867|11.0|1.4|-.-|ALIFAKI-KIRKAGAC (MANISA)
07:59:16|39.1803|28.1043|11.1|2.0|-.-|ORMANICI-SINDIRGI (BALIKESIR)
07:25:47|39.2008|27.9705|10.6|2.7|-.-|AKKOCALI-AKHISAR (MANISA)
07:16:49|39.2293|29.0243|17.0|1.3|-.-|YEMISLI-SIMAV (KUTAHYA)
06:45:15|39.1940|28.0305|12.4|1.7|-.-|SAHINKAYA-SINDIRGI (BALIKESIR)
06:44:48|37.4575|37.1670|8.9|1.4|-.-|DOGANLIKARAHASAN-PAZARCIK (KAHRAMANMARAS)
06:23:17|37.6853|35.3838|14.2|1.3|-.-|KUP-ALADAG (ADANA)
06:09:44|39.1817|28.1253|5.4|1.8|-.-|ORMANICI-SINDIRGI (BALIKESIR)
06:06:22|39.1688|28.1217|9.6|1.8|-.-|ORMANICI-SINDIRGI (BALIKESIR)`;

document.getElementById("rows").innerHTML = quakes.split("\n").map((line) => {
  const [time, lat, lon, depth, ml, mw, place] = line.split("|");
  return `<tr><td>2025.10.27</td><td>${time}</td><td>${lat}</td><td>${lon}</td><td class="depth">${depth}</td><td>-.-</td><td>${ml}</td><td>${mw}</td><td>${place}</td><td class="quality">İlksel</td></tr>`;
}).join("");
```
